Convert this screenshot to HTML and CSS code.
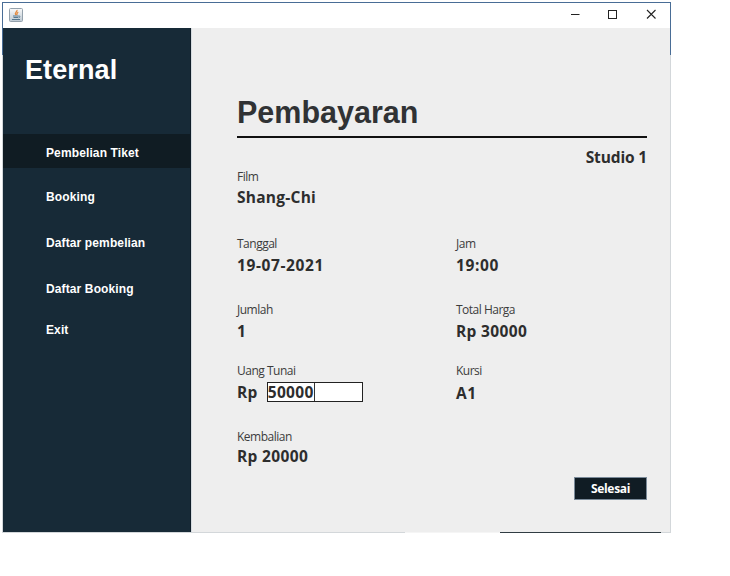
FILE: index.html
```html
<!DOCTYPE html>
<html lang="id">
<head>
<meta charset="utf-8">
<title>Eternal</title>
<link rel="stylesheet" href="styles.css">
</head>
<body>
<div class="window">
  <header class="titlebar">
    <svg class="java" width="14" height="14" viewBox="0 0 14 14">
      <defs><linearGradient id="g" x1="0" y1="0" x2="0" y2="1"><stop offset="0" stop-color="#fafafa"/><stop offset="1" stop-color="#bdc9d3"/></linearGradient></defs>
      <rect x=".5" y=".5" width="13" height="13" rx="1" fill="url(#g)" stroke="#94a1ac"/>
      <path d="M8 2C8.500 4 5 4.500 6.800 7M9.300 4C7.500 5 8.500 5.700 7.600 7" fill="none" stroke="#e58b40" stroke-width="1.300"/>
      <path d="M4 8h5.500M4.500 9.500h4.500M3 11.500h8M9.500 8.200c2-.6 2 1.300 0 1.600" fill="none" stroke="#57788f"/>
    </svg>
    <svg class="controls" width="87" height="10" viewBox="0 0 87 10" fill="none" stroke="#222">
      <path d="M0 5.500h8.500"/>
      <rect x="37.500" y="1.500" width="8" height="8"/>
      <path d="M76 1l8.500 8.500M84.500 1L76 9.500" stroke-width="1.100"/>
    </svg>
  </header>
  <div class="body">
    <aside class="sidebar">
      <h2 class="brand">Eternal</h2>
      <nav class="nav">
        <a class="item active">Pembelian Tiket</a>
        <a class="item booking">Booking</a>
        <a class="item purchases">Daftar pembelian</a>
        <a class="item bookings">Daftar Booking</a>
        <a class="item exit">Exit</a>
      </nav>
    </aside>
    <main class="content">
      <h1 class="title">Pembayaran</h1>
      <div class="studio value">Studio 1</div>
      <div class="fields">
        <div class="field first"><div class="label">Film</div><div class="value chi">Shang-Chi</div></div>
        <div></div>
        <div class="field"><div class="label">Tanggal</div><div class="value">19-07-2021</div></div>
        <div class="field"><div class="label">Jam</div><div class="value">19:00</div></div>
        <div class="field"><div class="label">Jumlah</div><div class="value">1</div></div>
        <div class="field"><div class="label">Total Harga</div><div class="value money">Rp 30000</div></div>
        <div class="field"><div class="label">Uang Tunai</div><div class="value cash money">Rp<div class="input"><span class="caret">50000</span></div></div></div>
        <div class="field"><div class="label">Kursi</div><div class="value seat">A1</div></div>
        <div class="field last"><div class="label">Kembalian</div><div class="value money">Rp 20000</div></div>
      </div>
      <button class="done">Selesai</button>
    </main>
  </div>
  <div class="edge"><i class="edge-light"></i><i class="edge-dark"></i></div>
</div>
</body>
</html>
```
FILE: styles.css
```css
* { box-sizing: border-box; }
body { margin: 0; padding: 2px; background: #fff; font-family: "Open Sans", "Noto Sans", sans-serif; color: #2d2d2d; }
.window { width: 669px; height: 531px; background: linear-gradient(#496d96 53px, #d3d7da 53px); padding: 1px; }
.titlebar { height: 25px; background: #fff; display: flex; justify-content: space-between; align-items: center; padding: 0 12px 0 6px; }
.controls { margin-top: -3px; }
.java { margin-top: -1px; }
.body { display: flex; height: 504px; }
.sidebar { width: 188px; background: #172a37; border-right: 1px solid #101e29; color: #fff; font-family: "Liberation Sans", Arial, sans-serif; }
.brand { margin: 25px 0 0 22px; font-size: 27px; line-height: 34px; height: 34px; letter-spacing: .1px; }
.nav { margin-top: 47px; display: flex; flex-direction: column; font-size: 12px; font-weight: bold; letter-spacing: .12px; }
.item { height: 34px; line-height: 38px; padding-left: 43px; }
.active { background: #101c23; }
.booking { margin-top: 10px; }
.purchases { margin-top: 12px; }
.bookings { margin-top: 12px; }
.exit { margin-top: 7px; }
.content { flex: 1; background: #eee; border-left: 1px solid #d5dbdf; padding: 62px 23px 0 45px; display: flex; flex-direction: column; }
.title { margin: 0; height: 48px; border-bottom: 2px solid #111; font: bold 30.500px/45px "Liberation Sans", Arial, sans-serif; color: #303234; }
.value { font-size: 15.500px; font-weight: bold; line-height: 22px; height: 22px; letter-spacing: .6px; white-space: pre; }
.studio { text-align: right; margin-top: 8px; letter-spacing: -.15px; }
.chi { letter-spacing: .25px; }
.money { letter-spacing: .35px; }
.fields { display: grid; grid-template-columns: 219px 1fr; grid-template-rows: 67px 66px 61px 66px 40px; margin-top: -1px; }
.label { font-size: 12px; line-height: 15px; height: 18px; padding-top: 2px; margin-bottom: 2px; letter-spacing: -.5px; color: #3c3c3c; }
.first .label { margin-bottom: 1px; }
.cash { display: flex; }
.input { width: 96px; height: 20px; margin: 1px 0 0 9px; background: #fff; border: 1px solid #222; line-height: 20px; }
.caret { display: inline-block; height: 18px; line-height: 19px; letter-spacing: .3px; border-right: 1px solid #333; vertical-align: top; }
.seat { padding-top: 1px; }
.last .label { margin-bottom: 0; }
.done { align-self: flex-end; width: 73px; height: 23px; margin-top: 10px; padding: 0; background: #101c24; color: #fff; border: 1px solid #7a8a99; border-radius: 0; font: bold 12px/20px "Open Sans", "Noto Sans", sans-serif; letter-spacing: -.3px; }
.edge { display: flex; height: 1px; padding-left: 402px; }
.edge-light { width: 95px; background: #f5f5f5; }
.edge-dark { width: 161px; background: #303c43; }
```
